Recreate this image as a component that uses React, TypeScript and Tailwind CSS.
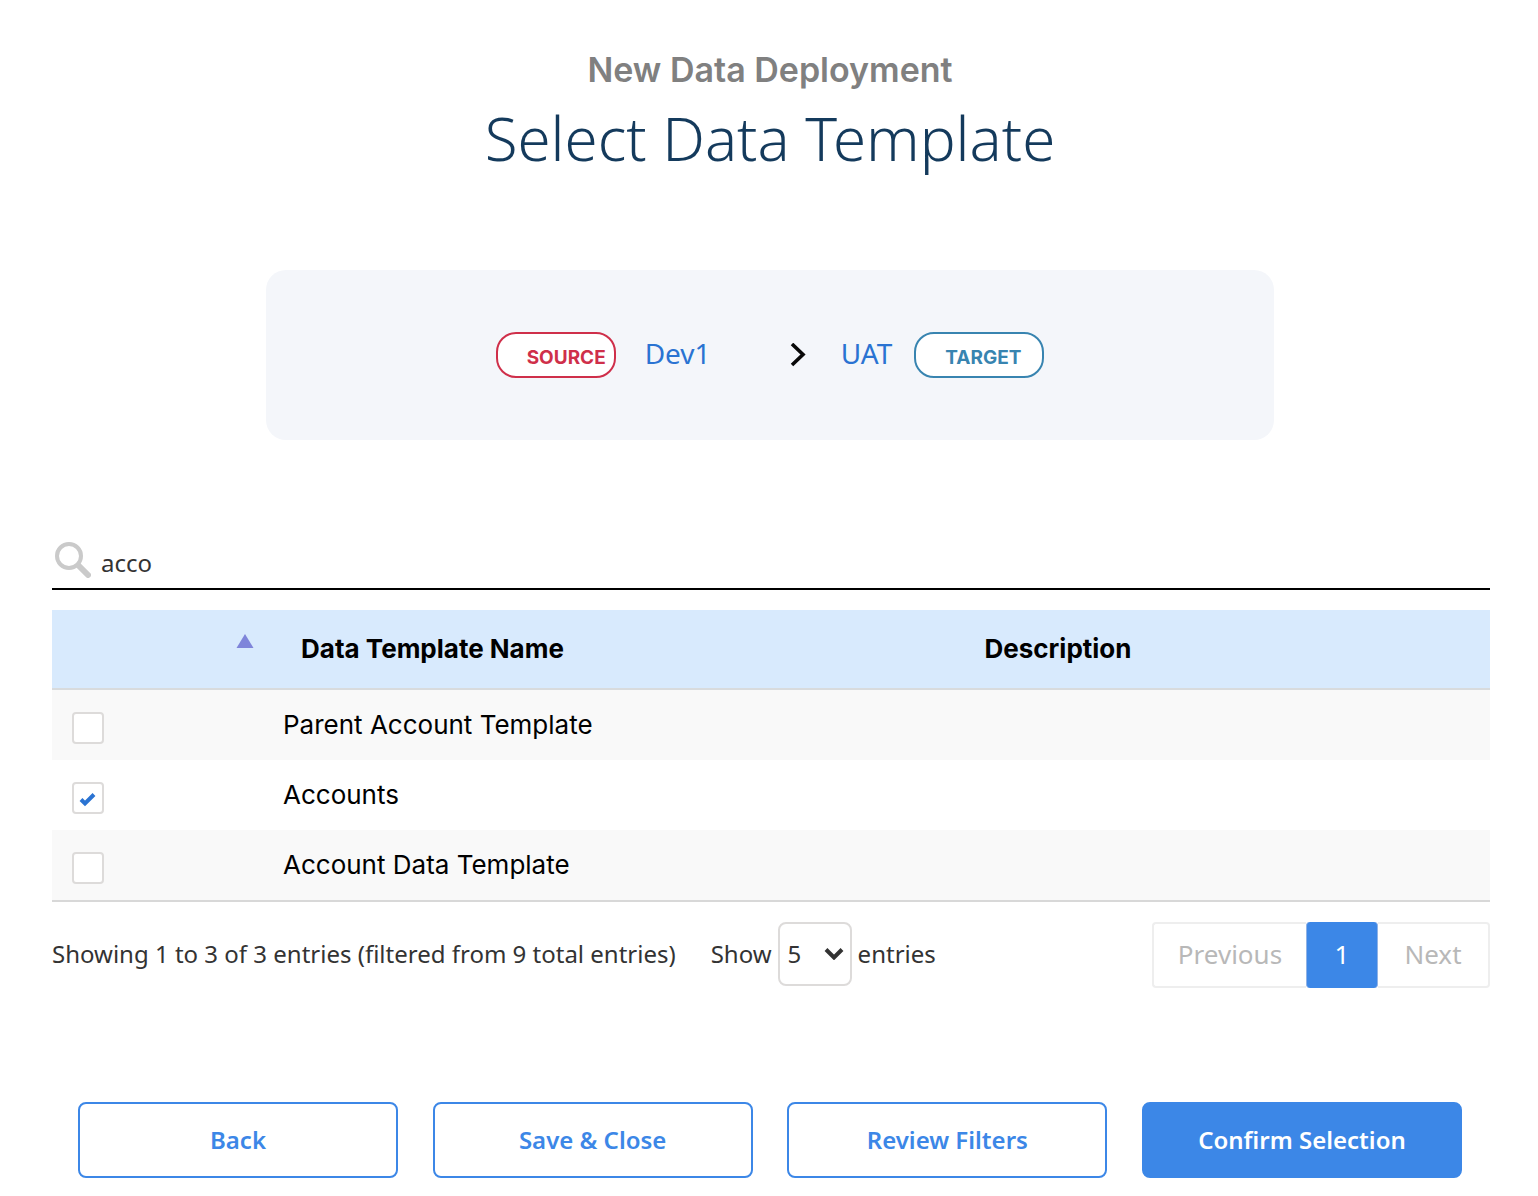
import { useState } from "react";
import { clsx } from "clsx";

const templates = [
  { id: "parent-account", name: "Parent Account Template", description: "" },
  { id: "accounts", name: "Accounts", description: "" },
  { id: "account-data", name: "Account Data Template", description: "" },
];

const actions = [
  { label: "Back", primary: false },
  { label: "Save & Close", primary: false },
  { label: "Review Filters", primary: false },
  { label: "Confirm Selection", primary: true },
];

const SearchIcon = () => (
  <svg className="h-9 w-9 shrink-0" viewBox="0 0 36 36" fill="none" stroke="#cacaca" aria-hidden="true">
    <circle cx="14" cy="14" r="12" strokeWidth="4" />
    <path d="M24 24 L33 33" strokeWidth="6" strokeLinecap="round" />
  </svg>
);

const Header = () => (
  <header className="text-center">
    <p className="font-['Inter',sans-serif] text-[34px] leading-[48px] font-semibold text-[#808080]">
      New Data Deployment
    </p>
    <h1 className="mt-1 text-[60px] leading-[80px] font-light text-[#143a5c]">
      Select Data Template
    </h1>
  </header>
);

const Environments = () => (
  <section className="mx-auto mt-[92px] flex h-[170px] w-full max-w-[1008px] items-center justify-center rounded-[20px] bg-[#f4f6fa]">
    <span className="flex h-[46px] w-[120px] items-center rounded-[20px] border-2 border-[#cf2f4a] bg-white pt-[6px] pl-[29px] font-['Inter',sans-serif] text-[19px] font-bold text-[#cf2f4a]">
      SOURCE
    </span>
    <span className="ml-[29px] w-[145px] pb-1 text-[28px] leading-[40px] text-[#2a73d2]">Dev1</span>
    <svg className="h-6 w-4" viewBox="0 0 16 24" fill="none" stroke="#080808" strokeWidth="3.6" aria-hidden="true">
      <path d="M2 1 L13 11.5 L2 22" />
    </svg>
    <span className="ml-[35px] pb-1 text-[28px] leading-[40px] text-[#2a73d2]">UAT</span>
    <span className="ml-[22px] flex h-[46px] w-[130px] items-center rounded-[20px] border-2 border-[#3884b0] bg-white pt-[6px] pl-[29px] font-['Inter',sans-serif] text-[19px] font-bold text-[#3884b0]">
      TARGET
    </span>
  </section>
);

const App = () => {
  const [query, setQuery] = useState("acco");
  const [pageSize, setPageSize] = useState("5");
  const [selected, setSelected] = useState("accounts");

  return (
    <main className="bg-white pt-[46px] pr-12 pb-4 pl-[52px] font-['Noto_Sans',sans-serif] text-[24px] leading-[32px] text-[#333333]">
      <div className="pr-[2px]">
        <Header />
        <Environments />
      </div>

      {/* Search */}
      <label className="mt-[100px] flex h-[50px] items-start border-b-2 border-black pt-[2px] pl-[3px]">
        <SearchIcon />
        <input
          type="text"
          aria-label="Search templates"
          value={query}
          onChange={(e) => setQuery(e.target.value)}
          className="ml-[10px] h-10 min-w-0 flex-1 bg-transparent outline-none"
        />
      </label>

      {/* Templates */}
      <table className="mt-5 w-full table-fixed border-separate border-spacing-0 border-b-2 border-[#d8d8d8] font-['Inter',sans-serif] text-[26px] text-black">
        <thead>
          <tr className="h-20 bg-[#d8eafd]">
            <th className="w-[211px] border-b-2 border-[#d8dbdd] pr-[9px] pb-4 align-middle" aria-sort="ascending" aria-label="Selected">
              <svg className="ml-auto h-[14px] w-[18px]" viewBox="0 0 18 14" aria-hidden="true">
                <path d="M9 0 L17.5 14 H0.5 Z" fill="#7f85da" />
              </svg>
            </th>
            <th className="w-[363px] border-b-2 border-[#d8dbdd] pr-6 font-bold">Data Template Name</th>
            <th className="border-b-2 border-[#d8dbdd] font-bold">Description</th>
          </tr>
        </thead>
        <tbody>
          {templates.map((template) => (
            <tr key={template.id} className="h-[70px] odd:bg-[#f9f9f9]">
              <td className="pt-[6px] pl-5">
                <span className="relative block h-8 w-8">
                  <input
                    id={template.id}
                    type="checkbox"
                    checked={selected === template.id}
                    onChange={() => setSelected(template.id)}
                    className="block h-8 w-8 appearance-none rounded-[4px] border-2 border-[#dddbda] bg-white"
                  />
                  {selected === template.id && (
                    <svg className="pointer-events-none absolute top-[10px] left-[7px] h-[15px] w-[17px]" viewBox="0 0 17 15" aria-hidden="true">
                      <path d="M2 7.5 L6 11.5 L15 2.5" fill="none" stroke="#2a73d2" strokeWidth="4" />
                    </svg>
                  )}
                </span>
              </td>
              <td className="pl-5 whitespace-nowrap">
                <label htmlFor={template.id}>{template.name}</label>
              </td>
              <td>{template.description}</td>
            </tr>
          ))}
        </tbody>
      </table>

      {/* Table footer */}
      <div className="mt-5 flex h-[66px] items-center">
        <p className="pb-[2px]">Showing 1 to 3 of 3 entries (filtered from 9 total entries)</p>
        <label className="ml-[35px] flex items-center pb-[2px]">
          Show
          <span className="relative mx-[6px]">
            <select
              value={pageSize}
              onChange={(e) => setPageSize(e.target.value)}
              className="block h-16 w-[74px] appearance-none rounded-[8px] border-2 border-[#dddbda] bg-white pl-2"
            >
              <option>5</option>
              <option>10</option>
              <option>25</option>
            </select>
            <svg className="pointer-events-none absolute top-[26px] right-2 h-3 w-5" viewBox="0 0 20 12" fill="none" stroke="#333333" strokeWidth="4" aria-hidden="true">
              <path d="M2 1.5 L10 9.5 L18 1.5" />
            </svg>
          </span>
          entries
        </label>
        <nav className="ml-auto flex h-[66px] text-[26px]" aria-label="Pagination">
          <button disabled className="w-[154px] rounded-l-[4px] border-2 border-r-0 border-[#eeeeee] pb-[2px] text-[#b8b8b8]">
            Previous
          </button>
          <button className="w-[72px] rounded-[4px] border-x border-[#8fb2e6] bg-[#3c87e7] pb-[2px] text-white" aria-current="page">
            1
          </button>
          <button disabled className="w-28 rounded-r-[4px] border-2 border-l-0 border-[#eeeeee] pb-[2px] text-[#b8b8b8]">
            Next
          </button>
        </nav>
      </div>

      {/* Actions */}
      <div className="mt-[114px] flex justify-between gap-4 pr-7 pl-[26px]">
        {actions.map((action) => (
          <button
            key={action.label}
            className={clsx(
              "h-[76px] w-80 rounded-[8px] border-2 border-[#3c87e7] font-semibold",
              action.primary ? "bg-[#3c87e7] text-white" : "bg-white text-[#3c87e7]"
            )}
          >
            {action.label}
          </button>
        ))}
      </div>
    </main>
  );
};

export default App;
